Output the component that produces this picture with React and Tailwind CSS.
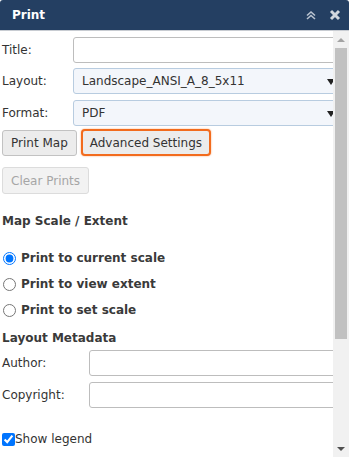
import React from 'react';

const font = { fontFamily: '"DejaVu Sans", Verdana, sans-serif' };

const TextInput = () => (
  <input
    type="text"
    className="h-[26px] w-[300px] shrink-0 rounded-[3px] border border-[#bdbdbd] bg-white px-2 text-[12px] text-[#333] outline-none"
  />
);

const SelectBox = ({ value }) => (
  <div className="relative flex h-[26px] w-[268px] shrink-0 items-center rounded-[3px] border border-[#b8cce0] bg-[#f3f6fb] pl-2 text-[12px] text-[#333]">
    <span>{value}</span>
    <span className="absolute left-[253px] top-[10px] h-0 w-0 border-x-[4px] border-t-[6px] border-x-transparent border-t-[#222]" />
  </div>
);

const Radio = ({ checked, label }) => (
  <label className="flex h-[26px] items-center gap-[5px] pl-[1px] text-[12px] font-bold text-[#3a3a3a]">
    <input type="radio" name="scale" defaultChecked={checked} className="m-0 h-[13px] w-[13px]" />
    <span>{label}</span>
  </label>
);

export default function App() {
  return (
    <div className="h-[457px] w-[349px] overflow-hidden bg-white" style={font}>
      {/* header */}
      <div className="flex h-[31px] items-center justify-between rounded-t-[3px] border-b border-[#c8ccd2] bg-[#243f62] pl-[12px] pr-[8px]">
        <span className="text-[12px] font-bold text-white">Print</span>
        <div className="flex items-center gap-[12px]">
          <svg width="12" height="12" viewBox="0 0 12 12" className="text-[#b9c3d0]">
            <path d="M2 6.5 L6 3 L10 6.5 M2 10 L6 6.5 L10 10" fill="none" stroke="currentColor" strokeWidth="1.6" />
          </svg>
          <svg width="12" height="12" viewBox="0 0 12 12" className="text-[#d2d7de]">
            <path d="M2 2 L10 10 M10 2 L2 10" fill="none" stroke="currentColor" strokeWidth="3" />
          </svg>
        </div>
      </div>

      <div className="flex h-[426px]">
        {/* content */}
        <div className="w-[333px] shrink-0 overflow-hidden pl-[2px] text-[12px] text-[#333]">
          <div className="flex h-[32px] items-end">
            <div className="flex items-center">
              <span className="w-[71px] shrink-0">Title:</span>
              <TextInput />
            </div>
          </div>
          <div className="mt-[5px] flex items-center">
            <span className="w-[71px] shrink-0">Layout:</span>
            <SelectBox value="Landscape_ANSI_A_8_5x11" />
          </div>
          <div className="mt-[6px] flex items-center">
            <span className="w-[71px] shrink-0">Format:</span>
            <SelectBox value="PDF" />
          </div>
          <div className="mt-[3px] flex items-center gap-[4px]">
            <button className="h-[26px] rounded-[3px] border border-[#c2c2c2] bg-[#ececec] px-[8px] text-[12px] text-[#333]">
              Print Map
            </button>
            <button className="h-[27px] rounded-[4px] border-2 border-[#f26b1d] bg-[#ececec] px-[7px] text-[12px] text-[#333] shadow-[0_0_2px_#f7a36f]">
              Advanced Settings
            </button>
          </div>
          <div className="mt-[11px]">
            <button className="h-[27px] rounded-[3px] border border-[#dcdcdc] bg-[#f2f2f2] px-[8px] text-[12px] text-[#a6a6a6]">
              Clear Prints
            </button>
          </div>
          <div className="mt-[18px] font-bold text-[#3a3a3a]">Map Scale / Extent</div>
          <div className="mt-[15px] flex flex-col">
            <Radio checked label="Print to current scale" />
            <Radio label="Print to view extent" />
            <Radio label="Print to set scale" />
          </div>
          <div className="mt-[6px] font-bold text-[#3a3a3a]">Layout Metadata</div>
          <div className="mt-[3px] flex items-center">
            <span className="w-[87px] shrink-0">Author:</span>
            <TextInput />
          </div>
          <div className="mt-[6px] flex items-center">
            <span className="w-[87px] shrink-0">Copyright:</span>
            <TextInput />
          </div>
          <label className="mt-[22px] flex items-center">
            <input type="checkbox" defaultChecked className="m-0 h-[13px] w-[13px]" />
            <span>Show legend</span>
          </label>
        </div>

        {/* scrollbar */}
        <div className="flex w-[16px] flex-col items-center bg-[#f1f1f1]">
          <div className="flex h-[17px] w-full items-center justify-center">
            <span className="h-0 w-0 border-x-[4px] border-b-[4px] border-x-transparent border-b-[#a3a3a3]" />
          </div>
          <div className="h-[291px] w-[12px] bg-[#c1c1c1]" />
          <div className="flex-1" />
          <div className="flex h-[17px] w-full items-center justify-center">
            <span className="h-0 w-0 border-x-[4px] border-t-[4px] border-x-transparent border-t-[#505050]" />
          </div>
        </div>
      </div>
    </div>
  );
}
